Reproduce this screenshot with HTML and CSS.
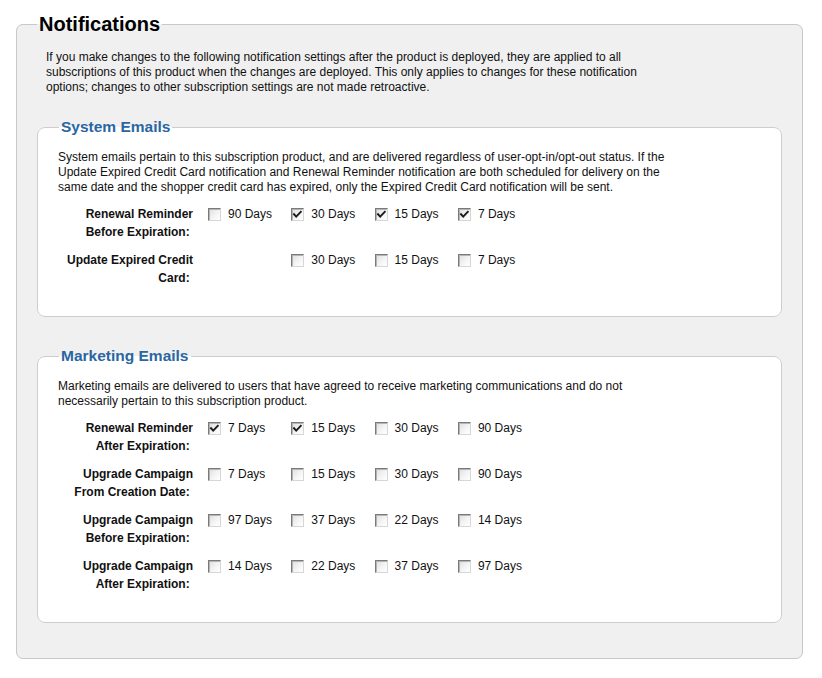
FILE: index.html
```html
<!DOCTYPE html>
<html lang="en">
<head>
<meta charset="utf-8">
<title>Notifications</title>
<link rel="stylesheet" href="styles.css">
</head>
<body>
<fieldset class="outer">
  <legend class="outer-title">Notifications</legend>
  <p class="intro">If you make changes to the following notification settings after the product is deployed, they are applied to all subscriptions of this product when the changes are deployed. This only applies to changes for these notification options; changes to other subscription settings are not made retroactive.</p>

  <fieldset class="group group-system">
    <legend class="group-title">System Emails</legend>
    <p class="desc">System emails pertain to this subscription product, and are delivered regardless of user-opt-in/opt-out status. If the Update Expired Credit Card notification and Renewal Reminder notification are both scheduled for delivery on the same date and the shopper credit card has expired, only the Expired Credit Card notification will be sent.</p>

    <div class="row">
      <div class="label">Renewal Reminder Before Expiration:&nbsp;</div>
      <label class="opt"><span class="cb"></span>90 Days</label>
      <label class="opt"><span class="cb on"><svg viewBox="0 0 11 11"><path d="M2 5.2 L4.2 7.6 L8.8 2.8"/></svg></span>30 Days</label>
      <label class="opt"><span class="cb on"><svg viewBox="0 0 11 11"><path d="M2 5.2 L4.2 7.6 L8.8 2.8"/></svg></span>15 Days</label>
      <label class="opt"><span class="cb on"><svg viewBox="0 0 11 11"><path d="M2 5.2 L4.2 7.6 L8.8 2.8"/></svg></span>7 Days</label>
    </div>
    <div class="row">
      <div class="label">Update Expired Credit Card:&nbsp;</div>
      <div class="opt-empty"></div>
      <label class="opt"><span class="cb"></span>30 Days</label>
      <label class="opt"><span class="cb"></span>15 Days</label>
      <label class="opt"><span class="cb"></span>7 Days</label>
    </div>
  </fieldset>

  <fieldset class="group group-marketing">
    <legend class="group-title">Marketing Emails</legend>
    <p class="desc">Marketing emails are delivered to users that have agreed to receive marketing communications and do not necessarily pertain to this subscription product.</p>

    <div class="row">
      <div class="label">Renewal Reminder After Expiration:&nbsp;</div>
      <label class="opt"><span class="cb on"><svg viewBox="0 0 11 11"><path d="M2 5.2 L4.2 7.6 L8.8 2.8"/></svg></span>7 Days</label>
      <label class="opt"><span class="cb on"><svg viewBox="0 0 11 11"><path d="M2 5.2 L4.2 7.6 L8.8 2.8"/></svg></span>15 Days</label>
      <label class="opt"><span class="cb"></span>30 Days</label>
      <label class="opt"><span class="cb"></span>90 Days</label>
    </div>
    <div class="row">
      <div class="label">Upgrade Campaign From Creation Date:&nbsp;</div>
      <label class="opt"><span class="cb"></span>7 Days</label>
      <label class="opt"><span class="cb"></span>15 Days</label>
      <label class="opt"><span class="cb"></span>30 Days</label>
      <label class="opt"><span class="cb"></span>90 Days</label>
    </div>
    <div class="row">
      <div class="label">Upgrade Campaign Before Expiration:&nbsp;</div>
      <label class="opt"><span class="cb"></span>97 Days</label>
      <label class="opt"><span class="cb"></span>37 Days</label>
      <label class="opt"><span class="cb"></span>22 Days</label>
      <label class="opt"><span class="cb"></span>14 Days</label>
    </div>
    <div class="row">
      <div class="label">Upgrade Campaign After Expiration:&nbsp;</div>
      <label class="opt"><span class="cb"></span>14 Days</label>
      <label class="opt"><span class="cb"></span>22 Days</label>
      <label class="opt"><span class="cb"></span>37 Days</label>
      <label class="opt"><span class="cb"></span>97 Days</label>
    </div>
  </fieldset>
</fieldset>
</body>
</html>
```

FILE: styles.css
```css
html, body {
  background: #ffffff;
}
body {
  margin: 0;
  padding: 12px 19px 0 16px;
  font-family: "Liberation Sans", Arial, sans-serif;
  font-size: 12px;
  color: #111;
}

.outer {
  margin: 0;
  border: 1px solid #c8c8c8;
  border-radius: 7px;
  background: #f0f0f0;
  padding: 14px 20px 35px 20px;
  min-width: 0;
}
.outer-title {
  font-size: 20px;
  line-height: 24px;
  font-weight: bold;
  color: #000;
  padding: 0 2px;
}
.intro {
  margin: 0 0 0 9px;
  width: 630px;
  line-height: 15px;
}

.group {
  border: 1px solid #cdcdcd;
  border-radius: 8px;
  background: #ffffff;
  margin: 0;
  padding: 14px 20px 29px 20px;
  min-width: 0;
}
.group-system {
  margin-top: 23px;
}
.group-marketing {
  margin-top: 30px;
}
.group-title {
  font-size: 15.5px;
  line-height: 18px;
  font-weight: bold;
  color: #2a66a1;
  padding: 0 2px;
  margin-left: 1px;
}
.desc {
  margin: 0;
  width: 618px;
  line-height: 15px;
}

.row {
  display: grid;
  grid-template-columns: 150px repeat(4, 83.3px);
  margin-top: 10px;
  line-height: 18px;
}
.label {
  width: 135px;
  text-align: right;
  font-weight: bold;
  color: #111;
}
.opt {
  display: flex;
  align-items: center;
  height: 18px;
  white-space: nowrap;
}
.cb {
  box-sizing: border-box;
  width: 13px;
  height: 13px;
  flex: none;
  margin-right: 7px;
  border: 1px solid;
  border-color: #7a7a7a #d6d6d6 #d6d6d6 #7a7a7a;
  box-shadow: inset 1px 1px 0 #b4b4b4;
  background: linear-gradient(135deg, #dedede 0%, #f4f4f4 55%, #ffffff 100%);
  position: relative;
}
.cb svg {
  position: absolute;
  left: 0;
  top: 0;
  width: 11px;
  height: 11px;
}
.cb path {
  fill: none;
  stroke: #1a1a1a;
  stroke-width: 1.9;
  stroke-linecap: square;
}
```
